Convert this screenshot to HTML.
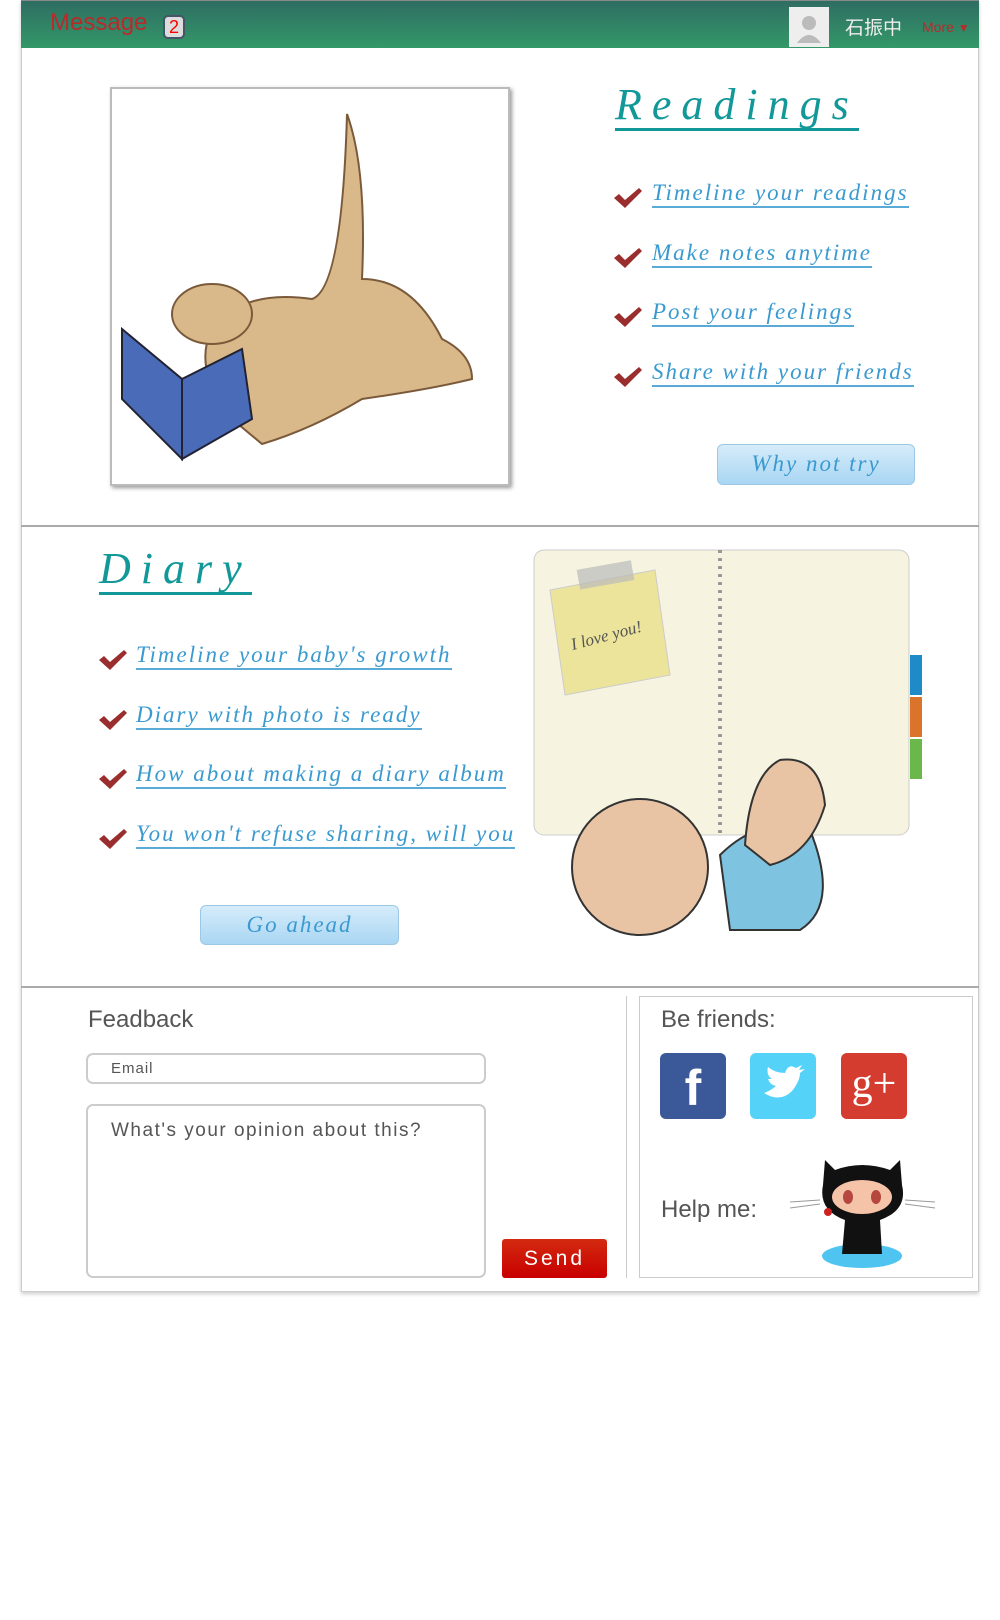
<!DOCTYPE html>
<html><head><meta charset="utf-8"><style>
*{margin:0;padding:0;box-sizing:border-box}
body{width:1000px;height:1620px;background:#fff;font-family:"Liberation Sans",sans-serif;position:relative;overflow:hidden}
.abs{position:absolute}
.wrap{position:absolute;left:21px;top:0;width:958px;height:1292px;border:1px solid #ccc;border-top:none;box-shadow:0 2px 4px rgba(0,0,0,.2)}
.hdr{position:absolute;left:21px;top:0;width:958px;height:48px;background:linear-gradient(#2f6d63,#339868);border-top:1px solid #888}
.title{font-family:"Liberation Serif",serif;font-style:italic;color:#129898;font-size:44px;letter-spacing:10px;border-bottom:3px solid #129898;line-height:46px}
.item{font-family:"Liberation Serif",serif;font-style:italic;color:#3a9ad0;font-size:23px;letter-spacing:2px;border-bottom:2px solid #5aaad8;line-height:26px;white-space:nowrap}
.chk{width:30px;height:22px}
.btn{border:1px solid #9cc8e6;border-radius:6px;background:linear-gradient(#d6ecfa,#a9d6f3);color:#3a9ad0;font-family:"Liberation Serif",serif;font-style:italic;font-size:23px;letter-spacing:2px;text-align:center;line-height:38px}
.sep{position:absolute;left:21px;width:958px;height:2px;background:#aaa}
.lbl{color:#555;font-size:24px}
</style></head><body>
<div class="wrap"></div>
<div class="hdr"></div>
<div class="abs" style="left:50px;top:9px;color:#b82b2b;font-size:24px">Message</div>
<div class="abs" style="left:163px;top:15px;width:22px;height:24px;background:#ddd;border:2px solid #456;border-radius:5px;color:#f00;font-size:18px;text-align:center;line-height:20px">2</div>
<div class="abs" style="left:789px;top:7px;width:40px;height:40px;background:#eee"><svg width="40" height="40"><circle cx="20" cy="16" r="7" fill="#bbb"/><path d="M8 36 Q20 20 32 36Z" fill="#bbb"/></svg></div>
<div class="abs" style="left:845px;top:16px;color:#eee;font-size:19px;font-family:'Noto Sans CJK SC',sans-serif;line-height:22px">石振中</div>
<div class="abs" style="left:922px;top:19px;color:#b82b2b;font-size:14px">More <span style="font-size:12px">▼</span></div>

<!-- section 1 -->
<div class="abs" style="left:110px;top:87px;width:400px;height:399px;border:2px solid #bbb;box-shadow:2px 2px 4px #999;background:#fff">
<svg width="396" height="395">
<path d="M235 25 Q255 80 250 190 Q300 190 330 250 Q360 265 360 290 Q320 300 250 310 Q200 340 150 355 L120 330 Q80 280 100 240 Q130 200 200 210 Q230 200 235 25Z" fill="#d9b889" stroke="#7a5a3a" stroke-width="2"/>
<path d="M10 240 L70 290 L70 370 L10 310Z M70 290 L130 260 L140 330 L70 370Z" fill="#4a6cb8" stroke="#223" stroke-width="2"/>
<ellipse cx="100" cy="225" rx="40" ry="30" fill="#d9b889" stroke="#7a5a3a" stroke-width="2"/>
</svg></div>
<div class="abs title" style="left:615px;top:82px">Readings</div>
<svg class="abs chk" style="left:613px;top:187px" viewBox="0 0 30 22"><path d="M1 11 L6 7 L12 13 L26 1 L29 4 L12 21Z" fill="#9a2d2d"/></svg>
<div class="abs item" style="left:652px;top:180px">Timeline your readings</div>
<svg class="abs chk" style="left:613px;top:247px" viewBox="0 0 30 22"><path d="M1 11 L6 7 L12 13 L26 1 L29 4 L12 21Z" fill="#9a2d2d"/></svg>
<div class="abs item" style="left:652px;top:240px">Make notes anytime</div>
<svg class="abs chk" style="left:613px;top:306px" viewBox="0 0 30 22"><path d="M1 11 L6 7 L12 13 L26 1 L29 4 L12 21Z" fill="#9a2d2d"/></svg>
<div class="abs item" style="left:652px;top:299px">Post your feelings</div>
<svg class="abs chk" style="left:613px;top:366px" viewBox="0 0 30 22"><path d="M1 11 L6 7 L12 13 L26 1 L29 4 L12 21Z" fill="#9a2d2d"/></svg>
<div class="abs item" style="left:652px;top:359px">Share with your friends</div>
<div class="abs btn" style="left:717px;top:444px;width:198px;height:41px">Why not try</div>
<div class="sep" style="top:525px"></div>

<!-- section 2 -->
<div class="abs title" style="left:99px;top:546px">Diary</div>
<svg class="abs chk" style="left:98px;top:649px" viewBox="0 0 30 22"><path d="M1 11 L6 7 L12 13 L26 1 L29 4 L12 21Z" fill="#9a2d2d"/></svg>
<div class="abs item" style="left:136px;top:642px">Timeline your baby's growth</div>
<svg class="abs chk" style="left:98px;top:709px" viewBox="0 0 30 22"><path d="M1 11 L6 7 L12 13 L26 1 L29 4 L12 21Z" fill="#9a2d2d"/></svg>
<div class="abs item" style="left:136px;top:702px">Diary with photo is ready</div>
<svg class="abs chk" style="left:98px;top:768px" viewBox="0 0 30 22"><path d="M1 11 L6 7 L12 13 L26 1 L29 4 L12 21Z" fill="#9a2d2d"/></svg>
<div class="abs item" style="left:136px;top:761px">How about making a diary album</div>
<svg class="abs chk" style="left:98px;top:828px" viewBox="0 0 30 22"><path d="M1 11 L6 7 L12 13 L26 1 L29 4 L12 21Z" fill="#9a2d2d"/></svg>
<div class="abs item" style="left:136px;top:821px">You won't refuse sharing, will you</div>
<div class="abs btn" style="left:200px;top:905px;width:199px;height:40px">Go ahead</div>
<svg class="abs" style="left:530px;top:545px" width="410" height="400">
<rect x="4" y="5" width="375" height="285" rx="10" fill="#f6f3e0" stroke="#ccc"/>
<rect x="380" y="110" width="12" height="40" fill="#1e8ac8"/><rect x="380" y="152" width="12" height="40" fill="#d9742a"/><rect x="380" y="194" width="12" height="40" fill="#6ab84a"/>
<line x1="190" y1="5" x2="190" y2="290" stroke="#999" stroke-width="4" stroke-dasharray="3 5"/>
<path d="M20 45 L125 25 L140 130 L35 150Z" fill="#ece49a" stroke="#ccc"/>
<rect x="48" y="20" width="55" height="20" fill="#bbb" opacity=".7" transform="rotate(-10 75 30)"/>
<text x="40" y="95" font-family="Liberation Serif" font-style="italic" font-size="17" fill="#555" transform="rotate(-15 80 90)">I love you!</text>
<path d="M190 310 Q230 270 280 285 Q310 360 270 385 L200 385Z" fill="#7ec4e0" stroke="#333" stroke-width="2"/>
<circle cx="110" cy="322" r="68" fill="#e8c4a4" stroke="#333" stroke-width="2"/>
<path d="M215 300 Q220 230 250 215 Q290 210 295 260 Q280 310 240 320Z" fill="#e8c4a4" stroke="#333" stroke-width="2"/>
</svg>
<div class="sep" style="top:986px"></div>

<!-- section 3 -->
<div class="abs lbl" style="left:88px;top:1006px">Feadback</div>
<div class="abs" style="left:86px;top:1053px;width:400px;height:31px;border:2px solid #ccc;border-radius:7px;font-size:15px;color:#555;padding:5px 0 0 23px;letter-spacing:1px">Email</div>
<div class="abs" style="left:86px;top:1104px;width:400px;height:174px;border:2px solid #ccc;border-radius:7px;font-size:19px;color:#555;padding:14px 0 0 23px;letter-spacing:1.5px">What's your opinion about this?</div>
<div class="abs" style="left:502px;top:1239px;width:105px;height:39px;background:linear-gradient(#d32a10,#c80000);border-radius:3px;color:#fff;font-size:21px;text-align:center;line-height:39px;letter-spacing:3px">Send</div>
<div class="abs" style="left:626px;top:996px;width:1px;height:282px;background:#ccc"></div>
<div class="abs" style="left:639px;top:996px;width:334px;height:282px;border:1px solid #ccc"></div>
<div class="abs lbl" style="left:661px;top:1006px">Be friends:</div>
<div class="abs" style="left:660px;top:1053px;width:66px;height:66px;background:#3b5998;border-radius:6px;color:#fff;font-size:50px;font-weight:bold;text-align:center;line-height:70px">f</div>
<div class="abs" style="left:750px;top:1053px;width:66px;height:66px;background:#55d2f8;border-radius:6px"><svg width="66" height="66"><path d="M14 40 Q30 50 42 38 Q50 28 50 20 L55 16 L49 17 L52 12 L46 15 Q38 10 35 20 Q25 20 18 14 Q16 22 22 26 L18 26 Q20 32 26 33 Q20 38 14 40Z" fill="#fff"/></svg></div>
<div class="abs" style="left:841px;top:1053px;width:66px;height:66px;background:#d33c2f;border-radius:6px;color:#fff;font-size:42px;font-family:'Liberation Serif',serif;text-align:center;line-height:62px">g+</div>
<div class="abs lbl" style="left:661px;top:1196px">Help me:</div>
<svg class="abs" style="left:790px;top:1150px" width="150" height="120">
<ellipse cx="72" cy="106" rx="40" ry="12" fill="#4fc4f0"/>
<path d="M35 10 L45 20 Q72 10 100 20 L110 10 L112 35 Q118 60 90 70 L92 104 L52 104 L55 70 Q28 60 33 35Z" fill="#111"/>
<ellipse cx="72" cy="47" rx="30" ry="17" fill="#f4c3a8"/>
<ellipse cx="58" cy="47" rx="5" ry="7" fill="#b5473f"/><ellipse cx="86" cy="47" rx="5" ry="7" fill="#b5473f"/>
<path d="M0 52 L30 50 M0 58 L30 54 M115 50 L145 52 M115 54 L145 58" stroke="#999"/>
<circle cx="38" cy="62" r="4" fill="#c22"/>
</svg>
</body></html>
